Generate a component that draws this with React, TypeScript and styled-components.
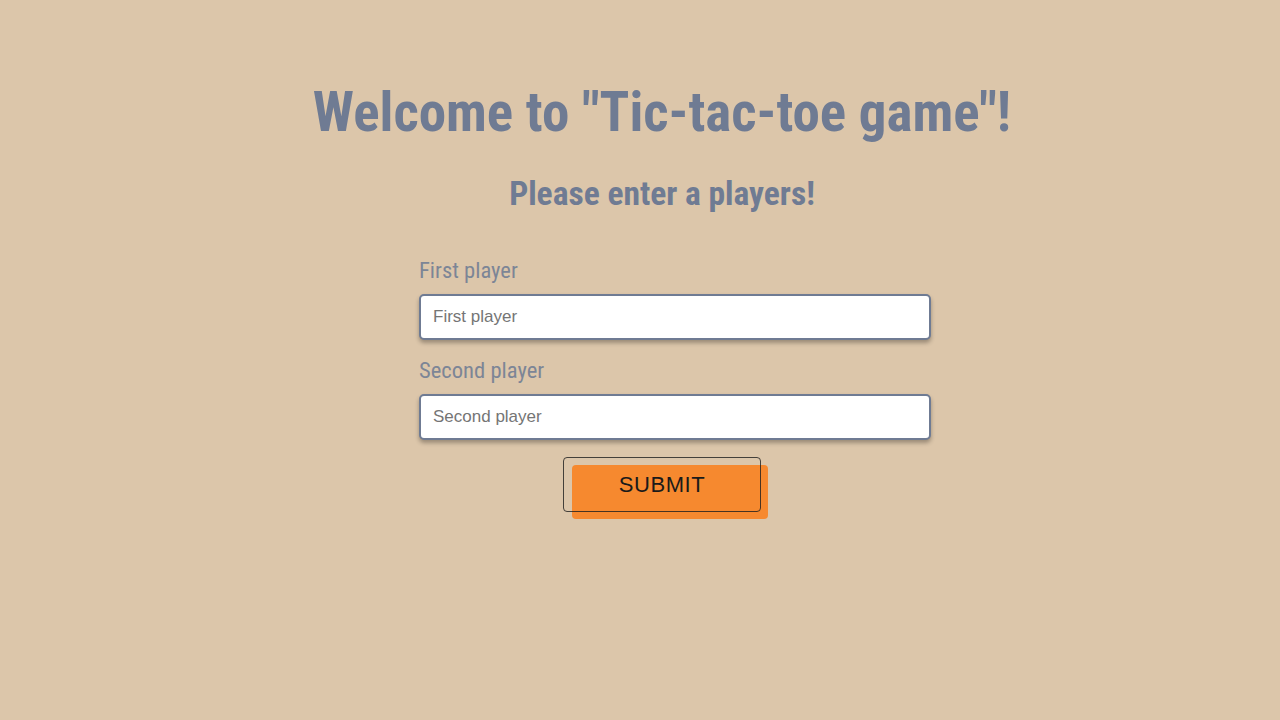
import React from 'react';
import styled, { createGlobalStyle } from 'styled-components';

const GlobalStyle = createGlobalStyle`
    html {
        background: #dcc6aa;
    }
    body {
        margin: 0;
        padding: 0;
    }
    * {
        box-sizing: border-box;
    }
`;

const Page = styled.main`
    display: flex;
    flex-direction: column;
    align-items: center;
    min-height: 720px;
    padding: 79px 0 0 44px;
    font-family: Roboto, 'Liberation Sans', sans-serif;
    font-stretch: 75%;
    color: #6f7b93;
`;

const Title = styled.h1`
    margin: 0;
    font-size: 55px;
    line-height: 66px;
    font-weight: 700;
`;

const Subtitle = styled.h2`
    margin: 29px 0 0;
    font-size: 33.5px;
    line-height: 40px;
    font-weight: 700;
`;

const Form = styled.form`
    display: flex;
    flex-direction: column;
    width: 512px;
    margin: 44px 0 0 26px;
`;

const Label = styled.label`
    font-size: 22.6px;
    line-height: 26px;
    color: #7c8596;
    margin-bottom: 10px;
`;

const Input = styled.input`
    height: 46px;
    padding: 0 12px;
    border: 2px solid #6f7b93;
    border-radius: 5px;
    background: #fff;
    box-shadow: 0 3px 4px rgba(0, 0, 0, 0.3);
    font-family: 'Liberation Sans', Arial, sans-serif;
    font-stretch: normal;
    font-size: 17px;
    color: #333;
    margin-bottom: 18px;
    outline: none;

    &::placeholder {
        color: #757575;
    }
`;

const Submit = styled.button`
    position: relative;
    z-index: 0;
    align-self: center;
    width: 198px;
    height: 55px;
    margin: -1px 0 0 -26px;
    border: none;
    background: transparent;
    font-family: 'Liberation Sans', Arial, sans-serif;
    font-stretch: normal;
    font-size: 22px;
    letter-spacing: 0.6px;
    color: #1a1a1a;
    cursor: pointer;

    &::before {
        content: '';
        position: absolute;
        z-index: -1;
        top: 8px;
        left: 9px;
        width: 196px;
        height: 54px;
        border-radius: 4px;
        background: #f6892f;
    }

    &::after {
        content: '';
        position: absolute;
        z-index: 1;
        inset: 0;
        border: 1.5px solid rgba(30, 30, 30, 0.8);
        border-radius: 4px;
    }
`;

export default function App() {
    return (
        <>
            <GlobalStyle />
            <Page>
                <Title>Welcome to "Tic-tac-toe game"!</Title>
                <Subtitle>Please enter a players!</Subtitle>
                <Form onSubmit={(e) => e.preventDefault()}>
                    <Label htmlFor="first">First player</Label>
                    <Input id="first" placeholder="First player" />
                    <Label htmlFor="second">Second player</Label>
                    <Input id="second" placeholder="Second player" />
                    <Submit type="submit">SUBMIT</Submit>
                </Form>
            </Page>
        </>
    );
}
